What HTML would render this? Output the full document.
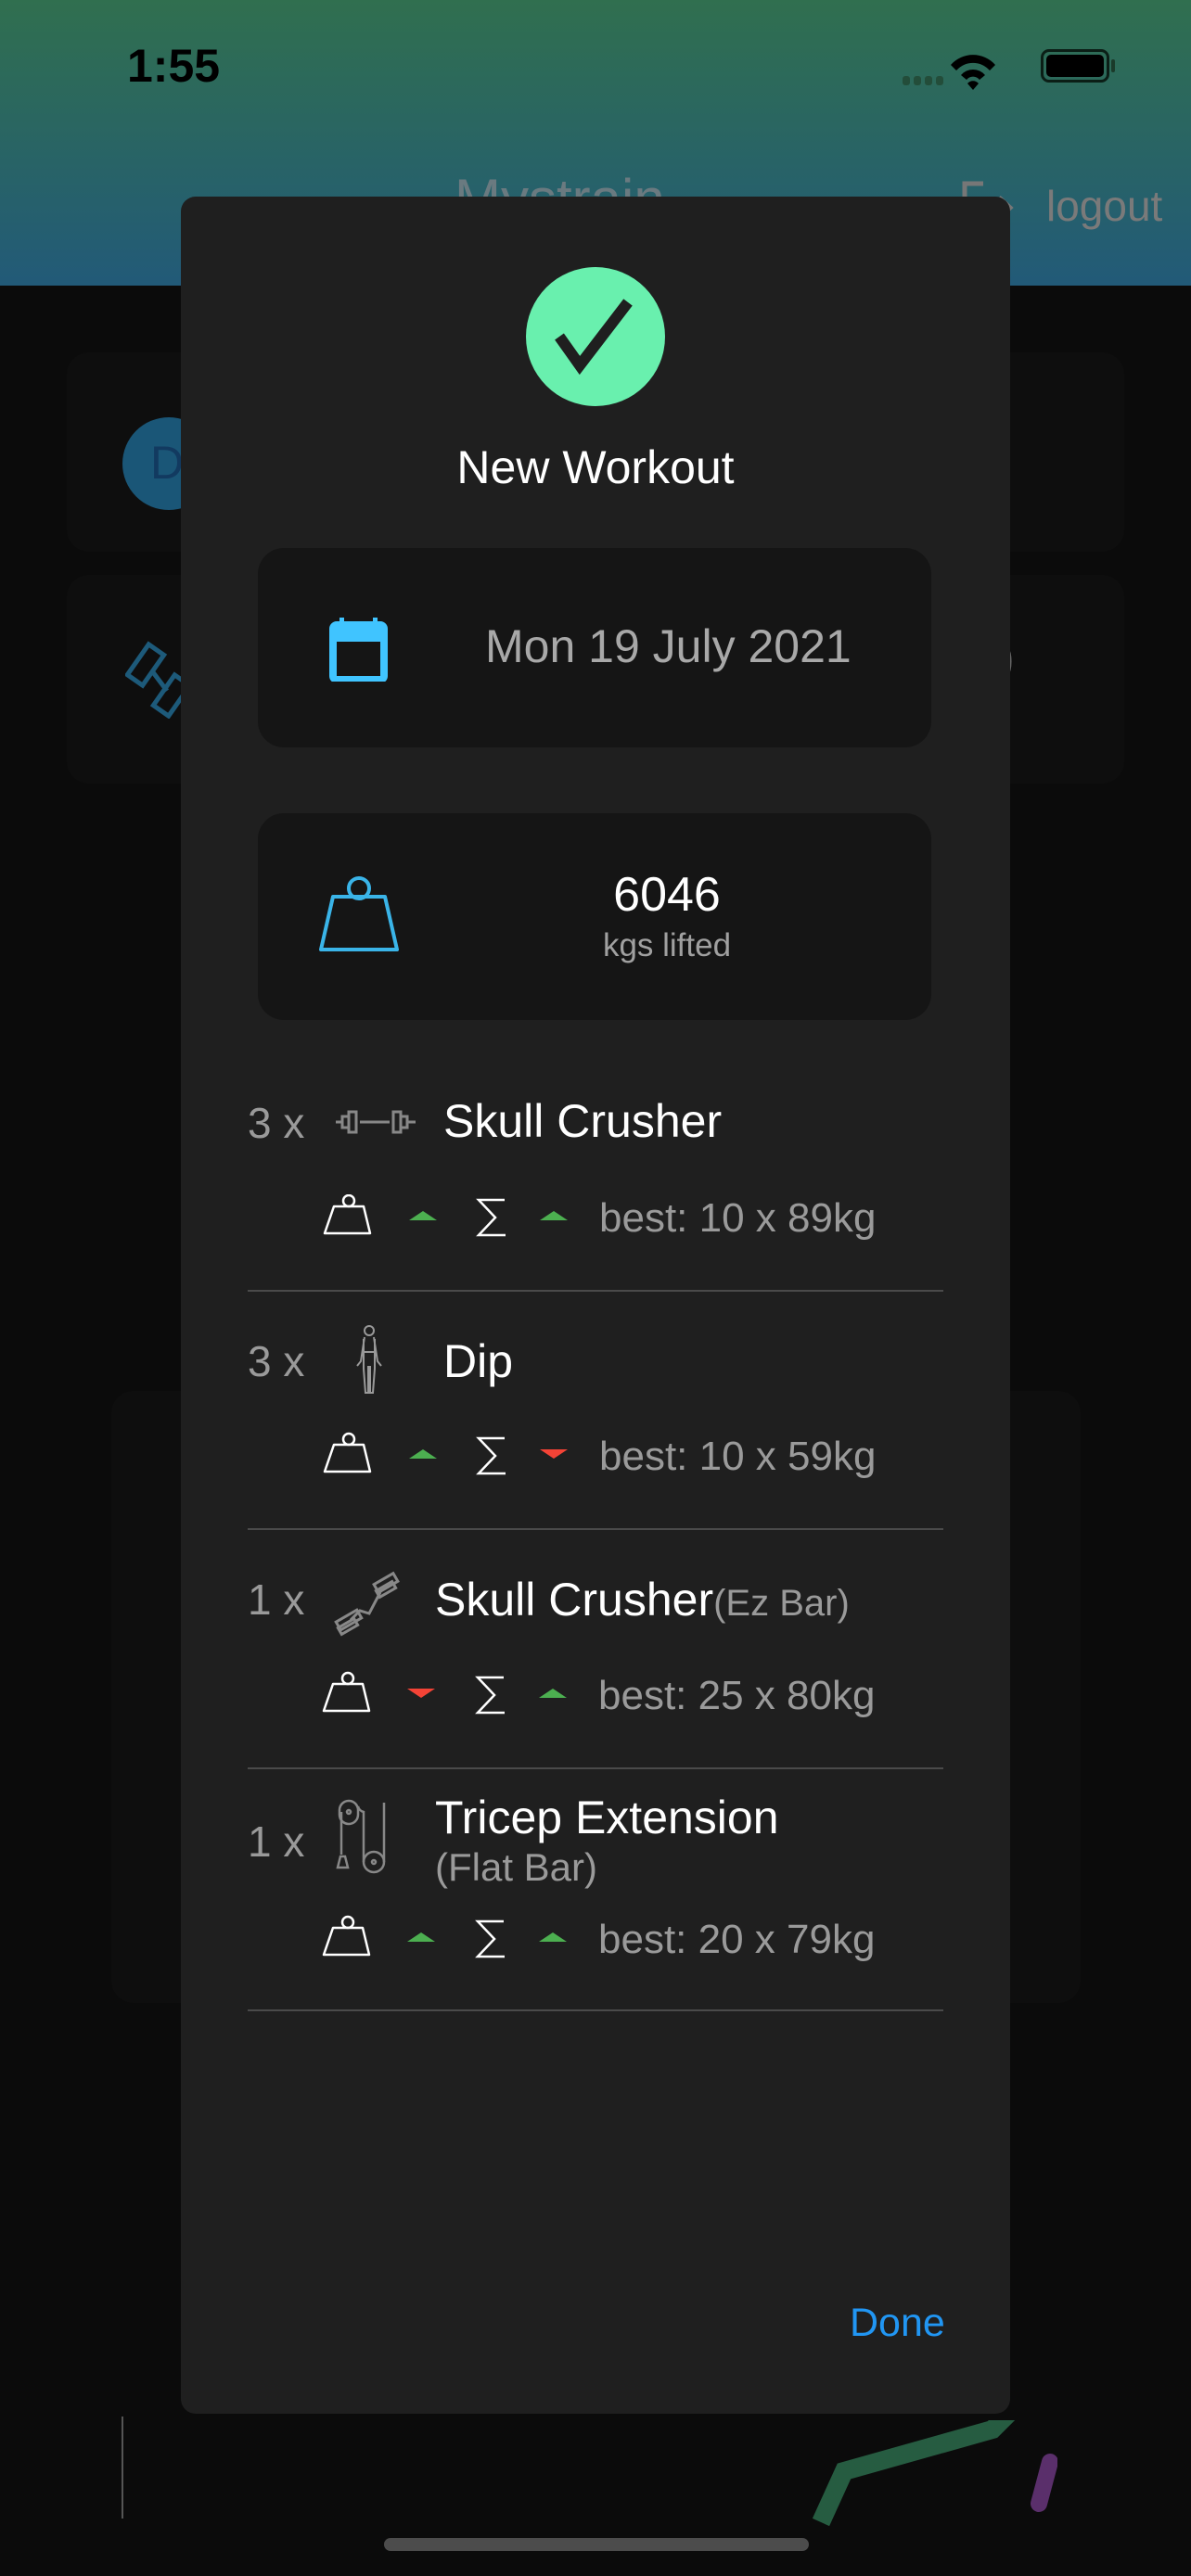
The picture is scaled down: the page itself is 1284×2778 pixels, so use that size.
<!DOCTYPE html>
<html><head><meta charset="utf-8"><style>
*{margin:0;padding:0;box-sizing:border-box}
body{width:1284px;height:2778px;background:#0b0b0b;position:relative;overflow:hidden;font-family:"Liberation Sans",sans-serif}
.a{position:absolute}
.hdr{left:0;top:0;width:1284px;height:308px;background:linear-gradient(#306f4f,#225a78)}
.t{position:absolute;white-space:nowrap}
.modal{left:195px;top:212px;width:894px;height:2391px;background:#1f1f1f;border-radius:16px}
.card{background:#151515;border-radius:28px}
.cnt{font-size:46px;color:#9a9a9a}
.nm{font-size:50px;color:#fff}
.best{font-size:44px;color:#9a9a9a}
.div{height:2px;background:#4a4a4a;left:267px;width:750px}
</style></head><body>
<div class="a hdr"></div>
<div class="t" style="left:137px;top:42px;font-size:50px;font-weight:bold;color:#000">1:55</div>
<svg class="a" style="left:970px;top:50px" width="150" height="50" viewBox="0 0 150 50">
<g fill="#234d3a"><rect x="3" y="32" width="8" height="10" rx="3"/><rect x="15" y="32" width="8" height="10" rx="3"/><rect x="27" y="32" width="8" height="10" rx="3"/><rect x="39" y="32" width="8" height="10" rx="3"/></g>
<path d="M55 20 A32 32 0 0 1 103 20 L97 26 A24 24 0 0 0 61 26Z M66 31 A17 17 0 0 1 92 31 L86 36 A9 9 0 0 0 72 36Z M79 47 L73 40 A8 8 0 0 1 85 40Z" fill="#000"/>
</svg>
<div class="a" style="left:1122px;top:53px;width:74px;height:36px;border:3px solid #0b1e16;border-radius:9px;padding:3px"><div style="width:100%;height:100%;background:#000;border-radius:5px"></div></div>
<div class="a" style="left:1198px;top:64px;width:4px;height:14px;background:#1a3a2a;border-radius:2px"></div>
<div class="t" style="left:490px;top:180px;font-size:60px;color:#6a7a80">Mystrain</div>
<svg class="a" style="left:1035px;top:195px" width="60" height="60"><path d="M25 3H5V55H25M25 29H52M42 18L54 29L42 40" stroke="#777" stroke-width="5" fill="none"/></svg>
<div class="t" style="left:1128px;top:195px;font-size:46px;color:#7a7a7a">logout</div>
<div class="a" style="left:72px;top:380px;width:1140px;height:215px;background:#0e0e0e;border-radius:24px"></div>
<div class="a" style="left:132px;top:450px;width:100px;height:100px;border-radius:50%;background:#1a5677"></div>
<div class="t" style="left:162px;top:470px;font-size:50px;color:#123a60">D</div>
<div class="a" style="left:72px;top:620px;width:1140px;height:225px;background:#0e0e0e;border-radius:24px"></div>
<svg class="a" style="left:135px;top:685px" width="80" height="90"><g stroke="#1d5a7a" stroke-width="5" fill="none"><rect x="12" y="12" width="20" height="40" transform="rotate(35 22 32)"/><rect x="40" y="45" width="20" height="40" transform="rotate(35 50 65)"/><path d="M30 40L45 60"/></g></svg>
<div class="t" style="left:1060px;top:680px;font-size:60px;color:#666">9</div>
<div class="a" style="left:120px;top:1500px;width:1045px;height:660px;background:#0e0e0e;border-radius:24px"></div>
<div class="a" style="left:131px;top:2606px;width:2px;height:110px;background:#555"></div>
<svg class="a" style="left:870px;top:2610px" width="270" height="120"><path d="M15 110L40 55L200 10L250 -40" stroke="#265c41" stroke-width="20" fill="none"/><path d="M250 90L262 45" stroke="#5a2f6b" stroke-width="18" fill="none" stroke-linecap="round"/></svg>

<div class="a modal"></div>
<div class="a" style="left:567px;top:288px;width:150px;height:150px;border-radius:50%;background:#69f0ae"></div>
<svg class="a" style="left:567px;top:288px" width="150" height="150"><path d="M36 75L58 106L110 38" stroke="#1f1f1f" stroke-width="12" fill="none"/></svg>
<div class="t" style="left:0;width:1284px;text-align:center;top:475px;font-size:50px;color:#fff">New Workout</div>

<div class="a card" style="left:278px;top:591px;width:726px;height:215px"></div>
<svg class="a" style="left:355px;top:665px" width="64" height="70"><rect x="4" y="9" width="55" height="59" rx="4" fill="none" stroke="#40c4ff" stroke-width="8"/><rect x="4" y="9" width="55" height="18" fill="#40c4ff"/><rect x="11" y="1" width="5" height="12" fill="#40c4ff"/><rect x="47" y="1" width="5" height="12" fill="#40c4ff"/></svg>
<div class="t" style="left:523px;top:668px;font-size:50px;color:#a8a8a8">Mon 19 July 2021</div>

<div class="a card" style="left:278px;top:877px;width:726px;height:223px"></div>
<svg class="a" style="left:340px;top:940px" width="95" height="92"><circle cx="47" cy="18" r="11" fill="none" stroke="#3ab4e8" stroke-width="4"/><path d="M19 27H75L88 84H6Z" fill="none" stroke="#3ab4e8" stroke-width="4" stroke-linejoin="round"/></svg>
<div class="t" style="left:519px;width:400px;text-align:center;top:935px;font-size:52px;color:#fff">6046</div>
<div class="t" style="left:519px;width:400px;text-align:center;top:1000px;font-size:35px;color:#a0a0a0">kgs lifted</div>

<!-- row 1 -->
<div class="t cnt" style="left:267px;top:1184px">3 x</div>
<svg class="a" style="left:360px;top:1190px" width="90" height="40"><g stroke="#888" stroke-width="3" fill="none"><path d="M28 20H60"/><rect x="16" y="9" width="8" height="22"/><rect x="64" y="9" width="8" height="22"/><rect x="9" y="14" width="7" height="12"/><rect x="72" y="14" width="7" height="12"/><path d="M2 20H9M79 20H88"/></g></svg>
<div class="t nm" style="left:478px;top:1180px">Skull Crusher</div>
<!-- row 2 -->
<div class="t cnt" style="left:267px;top:1441px">3 x</div>
<svg class="a" style="left:383px;top:1428px" width="30" height="76"><g stroke="#999" stroke-width="2" fill="none"><circle cx="15" cy="7" r="5"/><path d="M10 14L6 40L2 45M20 14L24 40L28 45M9 16V48L11 74H14V45M21 16V48L19 74H16V45M9 30H21"/></g></svg>
<div class="t nm" style="left:478px;top:1439px">Dip</div>
<!-- row 3 -->
<div class="t cnt" style="left:267px;top:1698px">1 x</div>
<svg class="a" style="left:358px;top:1692px" width="75" height="75"><g stroke="#888" stroke-width="3" fill="none"><path d="M20 55L30 45L40 48L52 25"/><rect x="46" y="10" width="24" height="10" transform="rotate(-30 58 15)"/><rect x="5" y="50" width="26" height="10" transform="rotate(-30 18 55)"/><rect x="48" y="18" width="20" height="8" transform="rotate(-30 58 22)"/><rect x="7" y="58" width="20" height="8" transform="rotate(-30 17 62)"/></g></svg>
<div class="t nm" style="left:469px;top:1696px">Skull Crusher<span style="font-size:40px;color:#9a9a9a">(Ez Bar)</span></div>
<!-- row 4 -->
<div class="t cnt" style="left:267px;top:1959px">1 x</div>
<svg class="a" style="left:358px;top:1940px" width="75" height="85"><g stroke="#888" stroke-width="2.5" fill="none"><rect x="8" y="2" width="20" height="25" rx="10"/><circle cx="18" cy="14" r="2"/><circle cx="45" cy="68" r="11"/><circle cx="45" cy="68" r="2"/><path d="M34 68V14A8 8 0 0 1 28 8M56 68V4M10 14V60M6 74L9 62H14L17 74Z"/></g></svg>
<div class="t nm" style="left:469px;top:1931px">Tricep Extension</div>
<div class="t" style="left:469px;top:1990px;font-size:42px;color:#9a9a9a">(Flat Bar)</div>

<!-- subrows -->
<svg class="a" style="left:340px;top:1288px" width="640" height="830">
<defs>
<g id="w"><circle cx="28" cy="7" r="6" fill="none" stroke="#fff" stroke-width="2.5"/><path d="M12 13H44L51 42H2Z" fill="none" stroke="#fff" stroke-width="2.5" stroke-linejoin="round"/></g>
<g id="s"><path d="M34 4H6L24 23L6 42H35" fill="none" stroke="#fff" stroke-width="2.5"/></g>
<path id="u" d="M0 16L15 6L30 16Z" fill="#4caf50"/>
<path id="d" d="M0 6L30 6L15 16Z" fill="#f44336"/>
</defs>
<use href="#w" x="8" y="0"/><use href="#u" x="101" y="12"/><use href="#s" x="170" y="2"/><use href="#u" x="242" y="12"/>
<use href="#w" x="8" y="257"/><use href="#u" x="101" y="269"/><use href="#s" x="170" y="259"/><use href="#d" x="242" y="269"/>
<use href="#w" x="7" y="515"/><use href="#d" x="99" y="527"/><use href="#s" x="169" y="517"/><use href="#u" x="241" y="527"/>
<use href="#w" x="7" y="778"/><use href="#u" x="99" y="790"/><use href="#s" x="169" y="780"/><use href="#u" x="241" y="790"/>
</svg>
<div class="t best" style="left:646px;top:1289px">best: 10 x 89kg</div>
<div class="t best" style="left:646px;top:1546px">best: 10 x 59kg</div>
<div class="t best" style="left:645px;top:1804px">best: 25 x 80kg</div>
<div class="t best" style="left:645px;top:2067px">best: 20 x 79kg</div>

<div class="a div" style="top:1391px"></div>
<div class="a div" style="top:1648px"></div>
<div class="a div" style="top:1906px"></div>
<div class="a div" style="top:2167px"></div>

<div class="t" style="left:916px;top:2481px;font-size:43px;color:#2196f3">Done</div>
<div class="a" style="left:414px;top:2737px;width:458px;height:14px;background:#4c4c4c;border-radius:7px"></div>
</body></html>
